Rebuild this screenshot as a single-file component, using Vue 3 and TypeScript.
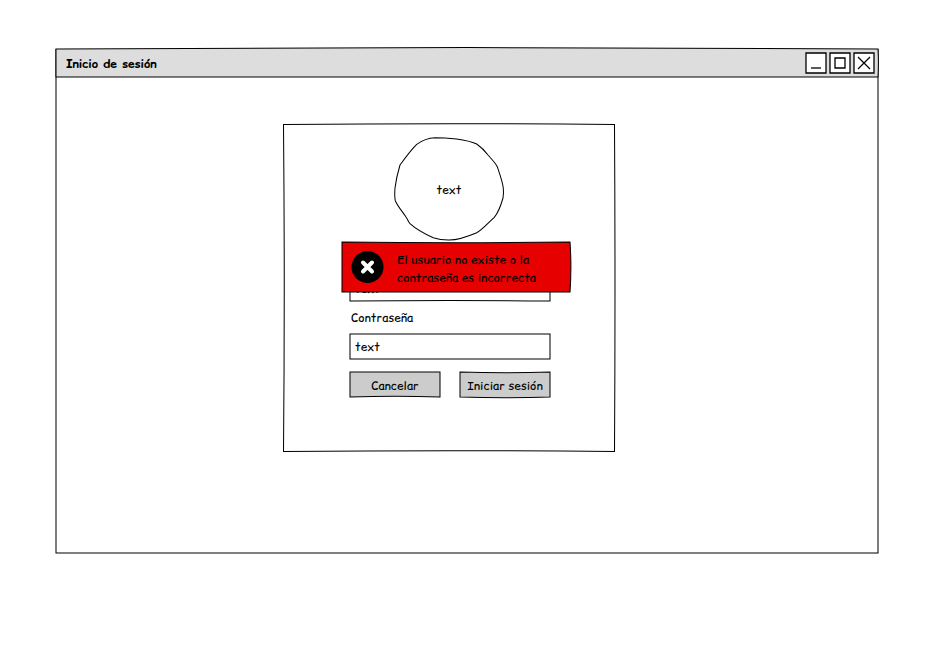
<script setup lang="ts">
import { ref } from 'vue'

const title = 'Inicio de sesión'
const username = ref('text')
const password = ref('text')
</script>

<template>
  <main class="page">
    <section class="window">
      <svg class="outline" width="822" height="504" viewBox="0 0 822 504">
        <path d="M0 0V504H822Q821.7 250 822 0" />
      </svg>
      <header class="titlebar">
        <svg class="outline" width="822" height="28" viewBox="0 0 822 28">
          <path class="bar" d="M0 0Q205 -1.5 411 -1.5Q617 -1.5 822 0Q822.8 14 822 28H0Z" />
        </svg>
        <h1 class="title"><span class="ink">{{ title }}</span></h1>
        <div class="controls">
          <svg class="control" width="20" height="20" viewBox="0 0 20 20"><path d="M0 0H20V20H0Z" /><path d="M5 15H15" /></svg>
          <svg class="control" width="20" height="20" viewBox="0 0 20 20"><path d="M0 0H20V20H0Z" /><path d="M5 5H15V15H5Z" /></svg>
          <svg class="control" width="20" height="20" viewBox="0 0 20 20"><path d="M0 0H20V20H0Z" /><path d="M4 4L16 16M16 4L4 16" /></svg>
        </div>
      </header>

      <div class="card">
        <svg class="outline" width="332" height="328" viewBox="0 0 332 328">
          <path d="M0.5 0.5Q166 -1 331.5 0.5Q332.500 164 331.5 327.5Q166 326 0.5 327.5Q2 164 0.5 0.5Z" />
        </svg>
        <div class="avatar">
          <svg class="outline" width="110" height="104" viewBox="394 137 110 104">
            <path d="M435 137.700C442 137.700 450 138.300 456.500 139C464 140 471 141.400 476.700 144C481 147 485 151 488 155C491.500 159 495.500 163 497.300 166.700C499 172 502.800 182 503.300 188.300C503.700 192 503.600 195 503 198C501 205 498 213 494.300 217.300C489 222 482 230 476.700 232.700C469 236 458 240.300 448.300 240C443 240 438 239.300 433.300 237.700C425 234 416 229 409.700 223.300C408 221 407.500 219 406 217C402 211 397.500 206 395.300 200.700C394.500 197 394.600 193 395 188C396 180 398.500 170 400 165C405 158 411 150 416.700 144.300C422 140.500 429 138 435 137.700Z" />
          </svg>
          <span class="ink">text</span>
        </div>

        <form class="form" @submit.prevent>
          <div class="field">
            <svg class="outline" width="200" height="25" viewBox="0 0 200 25"><path d="M0 0H200V25Q100 24 0 25Z" /></svg>
            <span class="ink">{{ username }}</span>
          </div>
          <label class="label"><span class="ink">Contraseña</span></label>
          <div class="field">
            <svg class="outline" width="200" height="25" viewBox="0 0 200 25"><path d="M0 0H200V25H0Z" /></svg>
            <span class="ink">{{ password }}</span>
          </div>
          <div class="actions">
            <button type="button" class="button">
              <svg class="outline" width="90" height="25" viewBox="0 0 90 25"><path class="gray" d="M0 0H90V25Q45 23.500 0 25Z" /></svg>
              <span class="ink">Cancelar</span>
            </button>
            <button type="submit" class="button">
              <svg class="outline" width="90" height="25" viewBox="0 0 90 25"><path class="gray" d="M0 0Q45 1.500 90 0V25Q45 26.500 0 25Z" /></svg>
              <span class="ink">Iniciar sesión</span>
            </button>
          </div>
        </form>

        <div class="alert" role="alert">
          <svg class="outline" width="228" height="50" viewBox="0 0 228 50"><path class="red" d="M0 0Q114 1.500 228 0Q229.800 25 228 50H0Z" /></svg>
          <svg class="error-icon" width="32" height="32" viewBox="0 0 32 32"><circle cx="15.500" cy="16" r="16" /><path d="M11 11.500L20 20.500M20 11.500L11 20.500" /></svg>
          <p class="message"><span class="ink">El usuario no existe o la</span><br><span class="ink">contraseña es incorrecta</span></p>
        </div>
      </div>
    </section>
  </main>
</template>

<style>
body { background: #fff; }
</style>

<style scoped>
.page {
  box-sizing: border-box;
  width: 950px;
  height: 650px;
  padding: 49px 0 0 56px;
  color: #000;
  font: 12px/18px "Comic Relief", "Comic Neue", cursive;
}
.window { position: relative; width: 822px; height: 504px; }
.outline { position: absolute; top: 0; left: 0; overflow: visible; fill: #fff; stroke: #000; stroke-width: 1.02; pointer-events: none; }
.bar { fill: #ddd; }
.gray { fill: #ccc; }
.red { fill: #e60000; }
.ink { position: relative; white-space: nowrap; }
.titlebar { position: relative; display: flex; align-items: center; justify-content: space-between; box-sizing: border-box; height: 28px; padding: 0 4px 0 10px; }
.title { margin: 0; padding-top: 2px; font-size: 12px; font-weight: bold; }
.controls { position: relative; display: flex; gap: 4px; }
.control { display: block; overflow: visible; fill: #fff; stroke: #000; stroke-width: 1.3; }
.card { position: relative; display: flow-root; width: 332px; height: 328px; margin: 47px 0 0 227px; }
.avatar { position: relative; display: flex; align-items: center; justify-content: center; box-sizing: border-box; width: 110px; height: 104px; margin: 13px 0 0 111px; padding-top: 2px; }
.form { width: 200px; margin: 35px 0 0 67px; }
.field { position: relative; display: flex; align-items: center; box-sizing: border-box; height: 25px; padding-left: 5px; }
.label { display: block; height: 18px; margin: 8px 0 7px 1px; }
.actions { display: flex; gap: 20px; margin-top: 13px; }
.button { position: relative; display: flex; align-items: center; justify-content: center; box-sizing: border-box; width: 90px; height: 25px; padding: 2px 0 0; border: 0; background: none; color: inherit; font: inherit; }
.alert { position: absolute; top: 118px; left: 59px; display: flex; align-items: center; gap: 13px; width: 228px; height: 50px; }
.error-icon { position: relative; flex: none; overflow: visible; margin-left: 10px; }
.error-icon path { fill: none; stroke: #fff; stroke-width: 4; stroke-linecap: round; }
.message { margin: 0; padding-top: 4px; }
</style>
